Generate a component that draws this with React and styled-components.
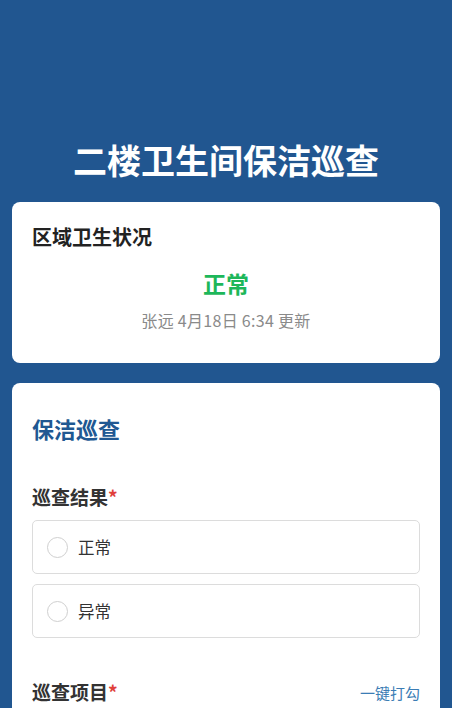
import React from "react";
import styled, { createGlobalStyle } from "styled-components";

const Global = createGlobalStyle`
  html, body { margin: 0; padding: 0; background: #215690; }
  body { font-family: "Noto Sans CJK SC", "Noto Sans", sans-serif; }
  * { box-sizing: border-box; }
`;

const Page = styled.div`
  min-height: 708px;
  background: #215690;
  padding: 0 12px 20px;
`;

const Header = styled.h1`
  margin: 0;
  padding-top: 138px;
  margin-bottom: 20px;
  font-size: 34px;
  line-height: 44px;
  font-weight: 700;
  color: #ffffff;
  text-align: center;
`;

const Card = styled.section`
  background: #ffffff;
  border-radius: 8px;
  padding: ${(p) => p.$pad};
  margin-bottom: 20px;
`;

const CardTitle = styled.div`
  font-size: 20px;
  line-height: 28px;
  font-weight: 700;
  color: #222222;
`;

const StatusText = styled.div`
  margin-top: 17px;
  text-align: center;
  font-size: 23px;
  line-height: 30px;
  font-weight: 700;
  color: #1db75a;
`;

const Meta = styled.div`
  margin-top: 11px;
  text-align: center;
  font-size: 16px;
  line-height: 22px;
  letter-spacing: 0.3px;
  color: #8a8a8a;
`;

const SectionTitle = styled.div`
  font-size: 22px;
  line-height: 30px;
  font-weight: 700;
  color: #205892;
`;

const FieldHeader = styled.div`
  margin-top: 41px;
  display: flex;
  justify-content: space-between;
  align-items: center;
`;

const FieldLabel = styled.div`
  font-size: 19px;
  line-height: 26px;
  font-weight: 700;
  color: #333333;
`;

const Required = styled.span`
  color: #e0403a;
`;

const LinkText = styled.span`
  font-size: 15px;
  color: #3b7db5;
`;

const Options = styled.div`
  margin-top: 10px;
  display: flex;
  flex-direction: column;
  gap: 10px;
`;

const Option = styled.label`
  height: 54px;
  border: 1px solid #dcdcdc;
  border-radius: 5px;
  display: flex;
  align-items: center;
  padding-left: 14px;
  gap: 10px;
  font-size: 16.5px;
  color: #333333;
`;

const Radio = styled.span`
  width: 21px;
  height: 21px;
  border-radius: 50%;
  border: 1px solid #cfcfcf;
  background: #fff;
`;

export default function App() {
  return (
    <>
      <Global />
      <Page>
        <Header>二楼卫生间保洁巡查</Header>
        <Card $pad="21px 20px 32px">
          <CardTitle>区域卫生状况</CardTitle>
          <StatusText>正常</StatusText>
          <Meta>张远 4月18日 6:34 更新</Meta>
        </Card>
        <Card $pad="30px 20px 30px">
          <SectionTitle>保洁巡查</SectionTitle>
          <FieldHeader>
            <FieldLabel>
              巡查结果<Required>*</Required>
            </FieldLabel>
          </FieldHeader>
          <Options>
            <Option>
              <Radio />
              正常
            </Option>
            <Option>
              <Radio />
              异常
            </Option>
          </Options>
          <FieldHeader>
            <FieldLabel>
              巡查项目<Required>*</Required>
            </FieldLabel>
            <LinkText>一键打勾</LinkText>
          </FieldHeader>
        </Card>
      </Page>
    </>
  );
}
